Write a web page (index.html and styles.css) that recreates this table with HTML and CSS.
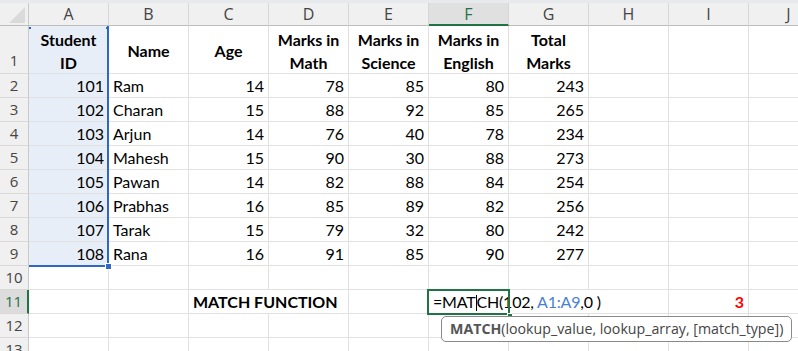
FILE: index.html
```html
<!DOCTYPE html>
<html>
<head>
<meta charset="utf-8">
<link rel="stylesheet" href="styles.css">
</head>
<body>
<div class="sheet">
  <div class="strip"></div>

  <div class="corner"><svg width="28" height="22" viewBox="0 0 28 22"><polygon points="25,4 25,20 9,20" fill="#dadada"/></svg></div>
  <div class="ch">A</div><div class="ch">B</div><div class="ch">C</div><div class="ch">D</div><div class="ch">E</div>
  <div class="ch ch-on">F</div><div class="ch">G</div><div class="ch">H</div><div class="ch">I</div><div class="ch">J</div>

  <div class="rh rh-1">1</div>
  <div class="c hd s first">Student<br>ID<div class="selbox"></div></div><div class="c hd">Name</div><div class="c hd">Age</div>
  <div class="c hd">Marks in<br>Math</div><div class="c hd">Marks in<br>Science</div><div class="c hd">Marks in<br>English</div>
  <div class="c hd">Total<br>Marks</div><div class="c"></div><div class="c"></div><div class="c"></div>

  <div class="rh">2</div>
  <div class="c n s">101</div><div class="c">Ram</div><div class="c n">14</div><div class="c n">78</div><div class="c n">85</div><div class="c n">80</div><div class="c n">243</div><div class="c"></div><div class="c"></div><div class="c"></div>
  <div class="rh">3</div>
  <div class="c n s">102</div><div class="c">Charan</div><div class="c n">15</div><div class="c n">88</div><div class="c n">92</div><div class="c n">85</div><div class="c n">265</div><div class="c"></div><div class="c"></div><div class="c"></div>
  <div class="rh">4</div>
  <div class="c n s">103</div><div class="c">Arjun</div><div class="c n">14</div><div class="c n">76</div><div class="c n">40</div><div class="c n">78</div><div class="c n">234</div><div class="c"></div><div class="c"></div><div class="c"></div>
  <div class="rh">5</div>
  <div class="c n s">104</div><div class="c">Mahesh</div><div class="c n">15</div><div class="c n">90</div><div class="c n">30</div><div class="c n">88</div><div class="c n">273</div><div class="c"></div><div class="c"></div><div class="c"></div>
  <div class="rh">6</div>
  <div class="c n s">105</div><div class="c">Pawan</div><div class="c n">14</div><div class="c n">82</div><div class="c n">88</div><div class="c n">84</div><div class="c n">254</div><div class="c"></div><div class="c"></div><div class="c"></div>
  <div class="rh">7</div>
  <div class="c n s">106</div><div class="c">Prabhas</div><div class="c n">16</div><div class="c n">85</div><div class="c n">89</div><div class="c n">82</div><div class="c n">256</div><div class="c"></div><div class="c"></div><div class="c"></div>
  <div class="rh">8</div>
  <div class="c n s">107</div><div class="c">Tarak</div><div class="c n">15</div><div class="c n">79</div><div class="c n">32</div><div class="c n">80</div><div class="c n">242</div><div class="c"></div><div class="c"></div><div class="c"></div>
  <div class="rh">9</div>
  <div class="c n s">108</div><div class="c">Rana</div><div class="c n">16</div><div class="c n">91</div><div class="c n">85</div><div class="c n">90</div><div class="c n">277</div><div class="c"></div><div class="c"></div><div class="c"></div>

  <div class="rh">10</div>
  <div class="c"></div><div class="c"></div><div class="c"></div><div class="c"></div><div class="c"></div><div class="c"></div><div class="c"></div><div class="c"></div><div class="c"></div><div class="c"></div>

  <div class="rh rh-on">11</div>
  <div class="c"></div><div class="c"></div>
  <div class="c span2 b">MATCH FUNCTION</div>
  <div class="c"></div>
  <div class="c span3 active">=MAT<span class="caret"></span>CH(102, <span class="ref">A1:A9</span>,0 )<div class="tip"><b>MATCH</b>(lookup_value, lookup_array, [match_type])</div></div>
  <div class="c n red">3</div><div class="c"></div>

  <div class="rh">12</div>
  <div class="c"></div><div class="c"></div><div class="c"></div><div class="c"></div><div class="c"></div><div class="c"></div><div class="c"></div><div class="c"></div><div class="c"></div><div class="c"></div>
  <div class="rh">13</div>
  <div class="c"></div><div class="c"></div><div class="c"></div><div class="c"></div><div class="c"></div><div class="c"></div><div class="c"></div><div class="c"></div><div class="c"></div><div class="c"></div>
</div>
</body>
</html>
```

FILE: styles.css
```css
html, body {
  margin: 0;
  padding: 0;
  width: 798px;
  height: 351px;
  overflow: hidden;
  background: #ffffff;
}

.sheet {
  display: grid;
  grid-template-columns: 29px repeat(10, 80px);
  grid-template-rows: 3px 23px 48px repeat(12, 24px);
  font-family: "Lato", "Liberation Sans", sans-serif;
  font-size: 16px;
  color: #000;
  width: 829px;
}

.strip {
  grid-column: 1 / -1;
  background: #e7eaed;
}

.corner {
  background: #f0f0f0;
  border-right: 1px solid #c9c9c9;
  border-bottom: 1px solid #bdbdbd;
  box-sizing: border-box;
}
.corner svg { display: block; }

.ch {
  background: #f0f0f0;
  border-right: 1px solid #d6d6d6;
  border-bottom: 1px solid #bdbdbd;
  box-sizing: border-box;
  text-align: center;
  font-family: "Open Sans", "DejaVu Sans", sans-serif;
  font-size: 16px;
  line-height: 22px;
  color: #444;
}
.ch-on {
  background: #e0e0e0;
  color: #217346;
  border-bottom: 2px solid #217346;
}

.rh {
  grid-column: 1;
  background: #f0f0f0;
  border-right: 1px solid #c9c9c9;
  border-bottom: 1px solid #d9d9d9;
  box-sizing: border-box;
  text-align: center;
  font-family: "Open Sans", "DejaVu Sans", sans-serif;
  font-size: 15px;
  line-height: 23px;
  color: #444;
}
.rh-1 {
  display: flex;
  align-items: flex-end;
  justify-content: center;
  padding-bottom: 1px;
}
.rh-on {
  background: #dcdcdc;
  color: #217346;
  border-right: 2px solid #217346;
}

.c {
  border-right: 1px solid #e1e1e1;
  border-bottom: 1px solid #e1e1e1;
  box-sizing: border-box;
  padding: 0 4px;
  line-height: 24px;
  white-space: nowrap;
}
.n { text-align: right; }
.s { background: #e8eef8; }
.b { font-weight: 700; }

.hd {
  display: flex;
  align-items: center;
  justify-content: center;
  text-align: center;
  font-weight: 700;
  line-height: 23px;
  white-space: normal;
  padding-top: 2px;
}

.span2 { grid-column: span 2; }
.span3 { grid-column: span 3; }

.active {
  position: relative;
  padding-left: 4px;
  letter-spacing: -0.2px;
}
.active::before {
  content: "";
  position: absolute;
  left: -2px;
  top: -1px;
  width: 83px;
  height: 26px;
  border: 2px solid #217346;
  box-sizing: border-box;
}
.active::after {
  content: "";
  position: absolute;
  left: 78px;
  top: 23px;
  width: 4px;
  height: 4px;
  background: #217346;
  border-left: 1px solid #fff;
  border-top: 1px solid #fff;
}
.caret {
  display: inline-block;
  width: 0;
  height: 16px;
  border-left: 1px solid #000;
  vertical-align: -3px;
}
.ref { color: #4a7fd6; }
.red { color: #ff0000; font-weight: 700; }

.tip {
  position: absolute;
  left: 12px;
  top: 26px;
  height: 26px;
  box-sizing: border-box;
  border: 1px solid #8a8a8a;
  border-radius: 5px;
  background: #fff;
  padding: 0 8px;
  font-family: "Open Sans", "DejaVu Sans", sans-serif;
  font-size: 14.2px;
  line-height: 24px;
  letter-spacing: 0;
  color: #444;
  white-space: nowrap;
  z-index: 3;
}
.tip b { color: #555; font-weight: 700; }

.first { position: relative; }
.selbox {
  position: absolute;
  left: 0;
  top: 0;
  width: 80px;
  height: 241px;
  box-sizing: border-box;
  border-right: 2px solid #2f66c8;
  border-bottom: 2px solid #2f66c8;
  pointer-events: none;
  z-index: 2;
}
.selbox::before {
  content: "";
  position: absolute;
  left: 0;
  top: 1px;
  width: 2px;
  height: 2px;
  background: #2f66c8;
  box-shadow: 77px 0 0 #2f66c8;
}
.selbox::after {
  content: "";
  position: absolute;
  right: -5px;
  bottom: -5px;
  width: 5px;
  height: 5px;
  background: #2f66c8;
  border: 1px solid #fff;
}
```
